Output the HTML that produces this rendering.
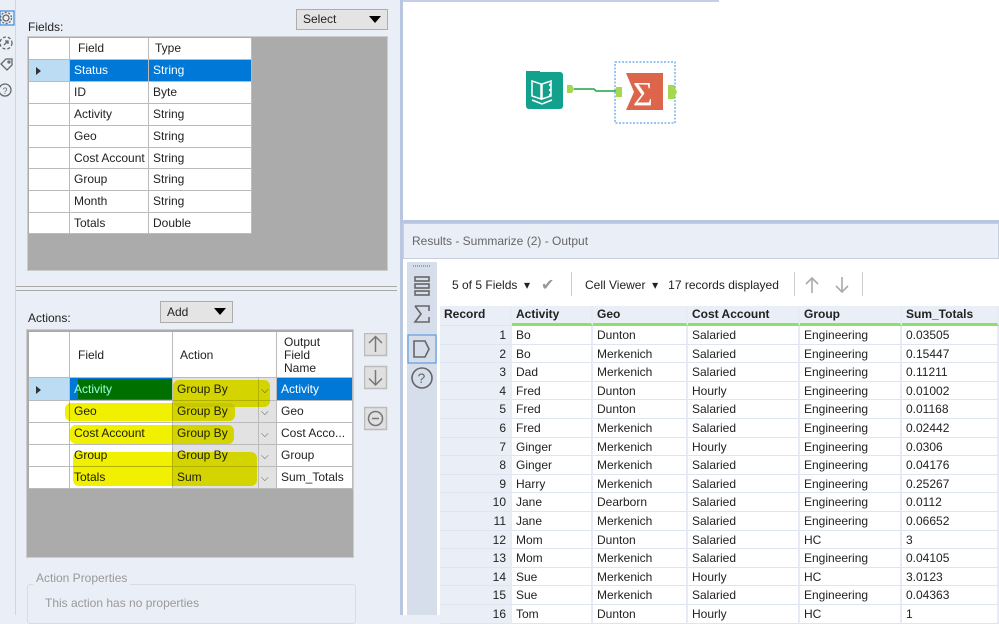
<!DOCTYPE html>
<html><head><meta charset="utf-8"><style>
*{box-sizing:border-box;margin:0;padding:0}
body{width:999px;height:615px;overflow:hidden;position:relative;background:#eaeef7;font-family:"Liberation Sans",sans-serif;font-size:12px;color:#222}
.a{position:absolute}
.c{position:absolute;background:#fff;border-right:1px solid #bbb;border-bottom:1px solid #bbb;padding-left:4px;line-height:21px;white-space:nowrap;overflow:hidden}
.btn{position:absolute;background:#e4e4e4;border:1px solid #adadad;padding-left:6px;font-size:12px}
.tri{position:absolute;right:6px;top:6px;width:0;height:0;border-left:6px solid transparent;border-right:6px solid transparent;border-top:7px solid #000}
.rg{position:absolute;left:440px;top:306px;width:559px}
.rg div.r{height:18.6px;display:flex}
.rg span{display:block;background:#fff;border-right:2px solid #e6ebf4;border-bottom:1px solid #dfe5f0;padding-left:4px;line-height:18px;white-space:nowrap;overflow:hidden}
.rg span:nth-child(1){width:72px;background:#eaeef7;text-align:right;padding-right:4px}
.rg span:nth-child(2){width:81px}.rg span:nth-child(3){width:95px}.rg span:nth-child(4){width:112px}.rg span:nth-child(5){width:102px}.rg span:nth-child(6){width:97px}
.rg .h{height:20px!important}
.rg .h span{background:#eaeef7;font-weight:bold;border-bottom:3px solid #8ee06a;line-height:17px}
.rg .h span:first-child{border-bottom:1px solid #dfe5f0;text-align:left}
.hl{position:absolute;background:#f0f000;mix-blend-mode:multiply;border-radius:6px}
</style></head><body>
<div class="a" style="left:0;top:0;width:16px;height:615px;background:#eaeef7;border-right:1px solid #d0d6e2"></div>
<svg class="a" style="left:0;top:8px" width="16" height="95" viewBox="0 0 16 95" fill="none" stroke="#666" stroke-width="1.3">
<rect x="0" y="3" width="14" height="14" stroke="#4a90d9"/><circle cx="6" cy="10" r="3"/><circle cx="6" cy="10" r="5.5" stroke-dasharray="2 1.5"/>
<circle cx="6" cy="35" r="6" stroke-dasharray="3 2"/><path d="M4 37l4-4M5 33h3v3"/>
<path d="M1 56l5-5h6v6l-5 5z"/><circle cx="9" cy="54" r="1"/>
<circle cx="5" cy="82" r="6"/><text x="2.5" y="86" font-size="9" fill="#666" stroke="none">?</text>
</svg>
<div class="a" style="left:28px;top:20px;font-size:12px">Fields:</div>
<div class="btn" style="left:296px;top:9px;width:92px;height:21px;line-height:19px">Select<div class="tri"></div></div>
<div class="a" style="left:27px;top:36px;width:361px;height:235px;background:#ababab;border:1px solid #ccc"></div>
<div class="c" style="left:29px;top:38px;width:41px;height:22px"></div>
<div class="c" style="left:70px;top:38px;width:79px;height:22px;padding-left:8px">Field</div>
<div class="c" style="left:149px;top:38px;width:103px;height:22px;padding-left:6px">Type</div>
<div class="c" style="left:29px;top:60px;width:41px;height:22px;background:#bcdcf4"><div class="a" style="left:7px;top:7px;border-top:4px solid transparent;border-bottom:4px solid transparent;border-left:5px solid #333"></div></div>
<div class="c" style="left:70px;top:60px;width:79px;height:22px;background:#0078d7;color:#fff">Status</div>
<div class="c" style="left:149px;top:60px;width:103px;height:22px;background:#0078d7;color:#fff">String</div>
<div class="c" style="left:29px;top:82px;width:41px;height:22px"></div><div class="c" style="left:70px;top:82px;width:79px;height:22px">ID</div><div class="c" style="left:149px;top:82px;width:103px;height:22px">Byte</div>
<div class="c" style="left:29px;top:104px;width:41px;height:22px"></div><div class="c" style="left:70px;top:104px;width:79px;height:22px">Activity</div><div class="c" style="left:149px;top:104px;width:103px;height:22px">String</div>
<div class="c" style="left:29px;top:126px;width:41px;height:22px"></div><div class="c" style="left:70px;top:126px;width:79px;height:22px">Geo</div><div class="c" style="left:149px;top:126px;width:103px;height:22px">String</div>
<div class="c" style="left:29px;top:148px;width:41px;height:21px"></div><div class="c" style="left:70px;top:148px;width:79px;height:21px">Cost Account</div><div class="c" style="left:149px;top:148px;width:103px;height:21px">String</div>
<div class="c" style="left:29px;top:169px;width:41px;height:22px"></div><div class="c" style="left:70px;top:169px;width:79px;height:22px">Group</div><div class="c" style="left:149px;top:169px;width:103px;height:22px">String</div>
<div class="c" style="left:29px;top:191px;width:41px;height:22px"></div><div class="c" style="left:70px;top:191px;width:79px;height:22px">Month</div><div class="c" style="left:149px;top:191px;width:103px;height:22px">String</div>
<div class="c" style="left:29px;top:213px;width:41px;height:21px"></div><div class="c" style="left:70px;top:213px;width:79px;height:21px">Totals</div><div class="c" style="left:149px;top:213px;width:103px;height:21px">Double</div>
<div class="a" style="left:16px;top:286px;width:381px;height:1px;background:#aaa"></div>
<div class="a" style="left:16px;top:290px;width:381px;height:1px;background:#aaa"></div>

<div class="a" style="left:28px;top:311px">Actions:</div>
<div class="btn" style="left:160px;top:301px;width:73px;height:22px;line-height:20px">Add<div class="tri"></div></div>
<div class="a" style="left:26px;top:329px;width:328px;height:229px;background:#ababab;border:1px solid #ccc"></div>
<div class="c" style="left:29px;top:332px;width:41px;height:46px"></div>
<div class="c" style="left:70px;top:332px;width:103px;height:46px;line-height:46px;padding-left:8px">Field</div>
<div class="c" style="left:173px;top:332px;width:104px;height:46px;line-height:46px;padding-left:7px">Action</div>
<div class="c" style="left:277px;top:332px;width:76px;height:46px;line-height:13px;padding:4px 22px 0 7px;white-space:normal">Output Field Name</div>
<div class="c" style="left:29px;top:378px;width:41px;height:23px;background:#bcdcf4"><div class="a" style="left:7px;top:8px;border-top:4px solid transparent;border-bottom:4px solid transparent;border-left:5px solid #333"></div></div>
<div class="c" style="left:70px;top:378px;width:103px;height:23px;background:#0078d7;line-height:23px"><div class="a" style="left:8px;top:1px;width:94px;height:20px;background:#007000"></div><span style="position:relative;color:#9fd">Activity</span></div>
<div class="c" style="left:277px;top:378px;width:76px;height:23px;background:#0078d7;color:#fff;line-height:23px">Activity</div>
<div class="c" style="left:29px;top:401px;width:41px;height:22px"></div><div class="c" style="left:70px;top:401px;width:103px;height:22px">Geo</div><div class="c" style="left:277px;top:401px;width:76px;height:22px">Geo</div>
<div class="c" style="left:29px;top:423px;width:41px;height:22px"></div><div class="c" style="left:70px;top:423px;width:103px;height:22px">Cost Account</div><div class="c" style="left:277px;top:423px;width:76px;height:22px">Cost Acco...</div>
<div class="c" style="left:29px;top:445px;width:41px;height:22px"></div><div class="c" style="left:70px;top:445px;width:103px;height:22px">Group</div><div class="c" style="left:277px;top:445px;width:76px;height:22px">Group</div>
<div class="c" style="left:29px;top:467px;width:41px;height:22px"></div><div class="c" style="left:70px;top:467px;width:103px;height:22px">Totals</div><div class="c" style="left:277px;top:467px;width:76px;height:22px">Sum_Totals</div>
<div class="c" style="left:173px;top:378px;width:104px;height:23px;background:#e2e2e2;line-height:23px">Group By</div>
<div class="c" style="left:173px;top:401px;width:104px;height:22px;background:#e2e2e2">Group By</div>
<div class="c" style="left:173px;top:423px;width:104px;height:22px;background:#e2e2e2">Group By</div>
<div class="c" style="left:173px;top:445px;width:104px;height:22px;background:#e2e2e2">Group By</div>
<div class="c" style="left:173px;top:467px;width:104px;height:22px;background:#e2e2e2">Sum</div>
<div class="a" style="left:258px;top:378px;width:1px;height:111px;background:#bbb"></div>
<div class="a" style="left:261px;top:380px;font-size:10px;color:#555;line-height:22px">⌵<br>⌵<br>⌵<br>⌵<br>⌵</div>
<div class="hl" style="left:173px;top:380px;width:97px;height:27px"></div>
<div class="hl" style="left:65px;top:403px;width:170px;height:18px"></div>
<div class="hl" style="left:70px;top:425px;width:164px;height:19px"></div>
<div class="hl" style="left:73px;top:452px;width:184px;height:34px"></div>
<svg class="a" style="left:364px;top:333px" width="24" height="100" viewBox="0 0 24 100" fill="none" stroke="#777" stroke-width="1.5">
<rect x="0.5" y="0.5" width="22" height="22" fill="#e0e0e0" stroke="#bbb"/><path d="M11.5 19V4M5 10l6.5-6.5L18 10"/>
<rect x="0.5" y="33.5" width="22" height="22" fill="#e0e0e0" stroke="#bbb"/><path d="M11.5 37v15M5 45.5l6.5 6.5 6.5-6.5"/>
<rect x="0.5" y="74.5" width="22" height="22" fill="#e0e0e0" stroke="#bbb"/><circle cx="11.5" cy="85.5" r="7"/><path d="M8 85.5h7"/>
</svg>
<div class="a" style="left:27px;top:584px;width:329px;height:40px;border:1px solid #d8dce6;border-radius:3px"></div>
<div class="a" style="left:33px;top:571px;padding:0 3px;background:#eaeef7;color:#999">Action Properties</div>
<div class="a" style="left:45px;top:596px;color:#999">This action has no properties</div>

<div class="a" style="left:400px;top:0;width:3px;height:615px;background:#b8c6e0"></div>
<div class="a" style="left:403px;top:0;width:596px;height:222px;background:#fff"></div>
<div class="a" style="left:403px;top:0;width:316px;height:2px;background:#c4cfe6"></div>
<div class="a" style="left:403px;top:220px;width:596px;height:3px;background:#b8c6e0"></div>
<svg class="a" style="left:520px;top:60px" width="165" height="66" viewBox="0 0 165 66">
<rect x="6" y="12" width="37" height="37" rx="3" fill="#11a18c"/><rect x="6" y="11" width="14" height="4" fill="#11a18c"/>
<path d="M12 21l9 3v15l-9-3zM31 21l-9 3v15l9-3z" fill="none" stroke="#fff" stroke-width="1.5"/><path d="M12 40l10 4 10-4" stroke="#fff" fill="none" stroke-width="1.5"/>
<circle cx="30" cy="25" r="1.2" fill="#fff"/><circle cx="30" cy="30" r="1.2" fill="#fff"/><circle cx="30" cy="35" r="1.2" fill="#fff"/>
<path d="M47 25h5l2 4-2 4h-5z" fill="#a6d84e"/>
<path d="M54 29h20l2 2h24" stroke="#1fa446" stroke-width="1.5" fill="none"/>
<rect x="95" y="2" width="60" height="61" fill="none" stroke="#2f8de4" stroke-dasharray="2 1.5"/>
<rect x="96" y="27" width="6" height="10" fill="#a6d84e"/>
<path d="M106 13h37v37h-37l8-18z" fill="#dd654b"/>
<text x="113" y="45" font-family="Liberation Serif" font-size="34" fill="#fff">Σ</text>
<path d="M148 25h6l3 7-3 7h-6z" fill="#a6d84e"/>
</svg>
<div class="a" style="left:403px;top:223px;width:596px;height:36px;background:#eaeef7;border:1px solid #c8cfdc"></div>
<div class="a" style="left:412px;top:234px;color:#666;font-size:12px">Results - Summarize (2) - Output</div>
<div class="a" style="left:403px;top:259px;width:596px;height:356px;background:#fff"></div>
<div class="a" style="left:407px;top:262px;width:30px;height:353px;background:#d6ddeb"></div>
<svg class="a" style="left:407px;top:262px" width="30" height="130" viewBox="0 0 30 130" fill="none" stroke="#666" stroke-width="1.6">
<path d="M6 4h18" stroke-dasharray="1 1" stroke-width="1"/>
<rect x="8" y="15" width="14" height="4"/><rect x="8" y="22" width="14" height="4"/><rect x="8" y="29" width="14" height="4"/>
<path d="M8 44h14v5M8 44l6 8-6 8h14v-5"/>
<rect x="1" y="73" width="28" height="28" stroke="#4a90d9" stroke-width="1"/><path d="M7 79h11l4 8-4 8H7z"/>
<circle cx="15" cy="116" r="10"/><text x="10.5" y="121" font-size="14" fill="#666" stroke="none" font-family="Liberation Sans">?</text>
</svg>
<div class="a" style="left:452px;top:278px;font-size:12px">5 of 5 Fields&nbsp; ▾</div>
<div class="a" style="left:541px;top:275px;color:#999;font-size:16px">✔</div>
<div class="a" style="left:571px;top:272px;width:1px;height:24px;background:#ccc"></div>
<div class="a" style="left:585px;top:278px">Cell Viewer&nbsp; ▾&nbsp;&nbsp; 17 records displayed</div>
<div class="a" style="left:794px;top:272px;width:1px;height:24px;background:#ccc"></div>
<svg class="a" style="left:802px;top:275px" width="50" height="20" fill="none" stroke="#aaa" stroke-width="1.6"><path d="M10 18V3M4 9l6-6 6 6M40 2v15M34 11l6 6 6-6"/></svg>
<div class="a" style="left:862px;top:272px;width:1px;height:24px;background:#ccc"></div>
<div class="rg">
<div class="r h"><span>Record</span><span>Activity</span><span>Geo</span><span>Cost Account</span><span>Group</span><span>Sum_Totals</span></div>
<div class="r"><span>1</span><span>Bo</span><span>Dunton</span><span>Salaried</span><span>Engineering</span><span>0.03505</span></div>
<div class="r"><span>2</span><span>Bo</span><span>Merkenich</span><span>Salaried</span><span>Engineering</span><span>0.15447</span></div>
<div class="r"><span>3</span><span>Dad</span><span>Merkenich</span><span>Salaried</span><span>Engineering</span><span>0.11211</span></div>
<div class="r"><span>4</span><span>Fred</span><span>Dunton</span><span>Hourly</span><span>Engineering</span><span>0.01002</span></div>
<div class="r"><span>5</span><span>Fred</span><span>Dunton</span><span>Salaried</span><span>Engineering</span><span>0.01168</span></div>
<div class="r"><span>6</span><span>Fred</span><span>Merkenich</span><span>Salaried</span><span>Engineering</span><span>0.02442</span></div>
<div class="r"><span>7</span><span>Ginger</span><span>Merkenich</span><span>Hourly</span><span>Engineering</span><span>0.0306</span></div>
<div class="r"><span>8</span><span>Ginger</span><span>Merkenich</span><span>Salaried</span><span>Engineering</span><span>0.04176</span></div>
<div class="r"><span>9</span><span>Harry</span><span>Merkenich</span><span>Salaried</span><span>Engineering</span><span>0.25267</span></div>
<div class="r"><span>10</span><span>Jane</span><span>Dearborn</span><span>Salaried</span><span>Engineering</span><span>0.0112</span></div>
<div class="r"><span>11</span><span>Jane</span><span>Merkenich</span><span>Salaried</span><span>Engineering</span><span>0.06652</span></div>
<div class="r"><span>12</span><span>Mom</span><span>Dunton</span><span>Salaried</span><span>HC</span><span>3</span></div>
<div class="r"><span>13</span><span>Mom</span><span>Merkenich</span><span>Salaried</span><span>Engineering</span><span>0.04105</span></div>
<div class="r"><span>14</span><span>Sue</span><span>Merkenich</span><span>Hourly</span><span>HC</span><span>3.0123</span></div>
<div class="r"><span>15</span><span>Sue</span><span>Merkenich</span><span>Salaried</span><span>Engineering</span><span>0.04363</span></div>
<div class="r"><span>16</span><span>Tom</span><span>Dunton</span><span>Hourly</span><span>HC</span><span>1</span></div>
</div>
</body></html>
